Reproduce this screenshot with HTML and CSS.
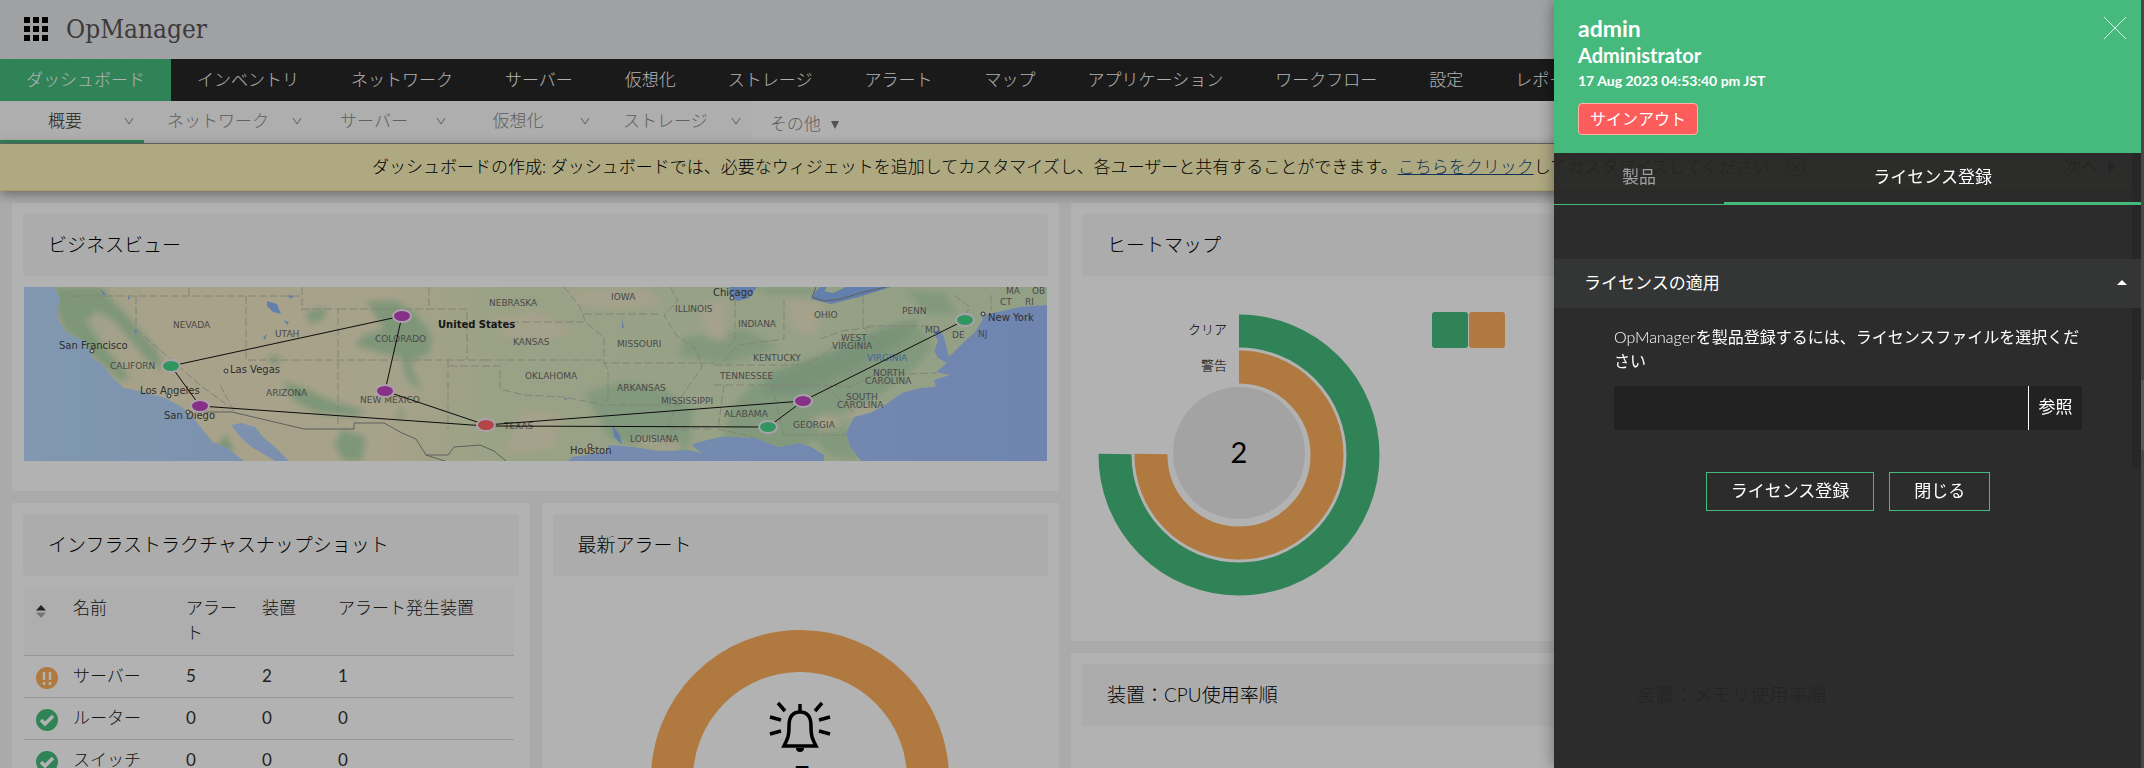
FILE: index.html
```html
<!DOCTYPE html>
<html lang="ja">
<head>
<meta charset="utf-8">
<meta name="viewport" content="width=device-width, initial-scale=1">
<title>OpManager</title>
<link rel="stylesheet" href="styles.css">
</head>
<body>
<div class="app">
  <header class="topbar">
    <button class="apps" aria-label="アプリ一覧">
      <svg width="24" height="24" viewBox="0 0 24 24"><path d="M0 0h6v6H0zM9 0h6v6H9zM18 0h6v6h-6zM0 9h6v6H0zM9 9h6v6H9zM18 9h6v6h-6zM0 18h6v6H0zM9 18h6v6H9zM18 18h6v6h-6z"/></svg>
    </button>
    <span class="brand">OpManager</span>
  </header>
  <nav class="mainnav">
    <a href="#" class="active">ダッシュボード</a><a href="#">インベントリ</a><a href="#">ネットワーク</a><a href="#">サーバー</a><a href="#">仮想化</a><a href="#">ストレージ</a><a href="#">アラート</a><a href="#">マップ</a><a href="#">アプリケーション</a><a href="#">ワークフロー</a><a href="#">設定</a><a href="#">レポート</a>
  </nav>
  <nav class="subnav">
    <a href="#" class="active">概要<svg class="chev" viewBox="0 0 10 8"><path d="M1 1l4 6 4-6"/></svg></a>
    <a href="#">ネットワーク<svg class="chev" viewBox="0 0 10 8"><path d="M1 1l4 6 4-6"/></svg></a>
    <a href="#">サーバー<svg class="chev" viewBox="0 0 10 8"><path d="M1 1l4 6 4-6"/></svg></a>
    <a href="#">仮想化<svg class="chev" viewBox="0 0 10 8"><path d="M1 1l4 6 4-6"/></svg></a>
    <a href="#">ストレージ<svg class="chev" viewBox="0 0 10 8"><path d="M1 1l4 6 4-6"/></svg></a>
    <button class="more">その他<svg width="8" height="8" viewBox="0 0 8 8"><path d="M0 0h8L4 8z"/></svg></button>
  </nav>
  <div class="notice">
    <p>ダッシュボードの作成: ダッシュボードでは、必要なウィジェットを追加してカスタマイズし、各ユーザーと共有することができます。<a href="#">こちらをクリック</a>してカスタマイズしてください</p>
    <button class="dismiss" aria-label="閉じる"><svg width="20" height="20" viewBox="0 0 20 20"><circle cx="10" cy="10" r="9"/><path d="M6 6l8 8M14 6l-8 8"/></svg></button>
    <a class="next" href="#">次へ<svg width="8" height="14" viewBox="0 0 8 14"><path d="M0 0l8 7-8 7z"/></svg></a>
  </div>

  <main class="board">
    <section class="card c-map">
      <h2>ビジネスビュー</h2>
      <svg class="map" viewBox="0 0 1023 174">
        <defs>
          <linearGradient id="land" x1="0" x2="1"><stop offset="0" stop-color="#e4e6c4"/><stop offset=".12" stop-color="#f2e9c6"/><stop offset=".33" stop-color="#f0e9c6"/><stop offset=".45" stop-color="#dde8c0"/><stop offset="1" stop-color="#d2e6bf"/></linearGradient>
          <linearGradient id="sea" x1="0" x2="1"><stop offset="0" stop-color="#b9dafc"/><stop offset=".25" stop-color="#b2cffa"/><stop offset="1" stop-color="#9fbffc"/></linearGradient>
          <filter id="soft"><feGaussianBlur stdDeviation="3"/></filter>
          <clipPath id="shape"><path id="us" d="M31 0L36 13 33 22 33 31 43 46 52 50 60 53 69 71 79 78 88 90 100 101 121 105 141 111 158 120 169 130 179 143 189 155 203 161 220 174H251L241 168 229 161 217 151 207 138 217 136 231 140 239 150 251 160 265 174H544L548 170 582 165 585 158 610 160 635 164 664 163 678 166 667 158 675 155 696 150 714 150 732 151 742 155 755 160 775 156 787 160 800 168 800 174H837L826 160 822 146 830 130 848 125 864 116 878 106 896 101 912 100 910 93 926 88 912 85 923 76 914 71 910 64 914 54 909 44 916 43 920 50 922 59 925 70 939 56 950 46 957 36 960 28 996 20 1023 18V0Z"/></clipPath>
        </defs>
        <rect width="1023" height="174" fill="url(#sea)"/>
        <use href="#us" fill="url(#land)"/>
        <g clip-path="url(#shape)">
          <g filter="url(#soft)">
            <path fill="#b6d8ad" d="M31 0L80 0 84 8 108 34 134 64 140 84 122 72 92 36 74 24 62 34 80 60 106 90 96 94 72 72 40 42 32 20ZM282 24l22 -4 -6 14 -14 2ZM342 14l30 0 20 12 16 22 -2 18 -16 8 -26 -6 -34 -10 10 -10 20 -6ZM258 94l20 6 30 14 34 10 -10 6 -40 -4 -24 -14ZM318 142l24 8 -4 24 -18 0 -10 -16ZM372 30l10 0 6 50 10 24 -14 -10 -8 -26ZM240 70l18 -2 -6 12ZM374 118l6 10 -6 8Z"/>
            <path fill="#bcdcb3" d="M560 106l40 -12 40 8 30 22 -6 40 -50 -4 -30 -10ZM660 50l60 -8 36 18 -56 18 -46 -10ZM730 96l50 -10 40 -26 40 -14 36 -6 14 20 -24 26 -40 30 -30 10 -30 30 -40 16 -50 -10 10 -40ZM780 140l40 -6 14 40 -30 -6ZM720 0h80l-20 8h-30ZM880 2l40 4 14 20 -30 2Z"/>
            <path fill="#aed3ae" d="M744 86l60 -20 50 -24 40 -10 -10 20 -50 30 -60 26 -36 0ZM190 166l12 -20 8 20Z"/>
            <path fill="#ece7c6" d="M676 18l26 -4 0 40 -20 -4ZM462 30l50 -6 40 20 -30 10 -44 -4ZM820 126l26 -10 14 2 -22 14ZM786 132l22 -6 10 14 -20 4ZM620 152l40 4 -10 8 -40 -6ZM544 2l80 0 14 16 -50 4 -34 -4ZM500 120l40 10 -10 30 -50 8ZM760 12l40 4 -10 34 -22 -8Z"/>
          </g>
          <g fill="#8fb7f5">
            <path d="M243 14l10 3 4 10 -8 -2 -6 -6ZM239 50l4 -3 -2 6ZM260 33l5 2 -2 3ZM264 8l6 1 -4 3ZM76 2l6 5 -2 2ZM110 42l3 1 -1 6ZM104 8l2 3 -2 2ZM588 138l8 10 2 10 -8 -8ZM598 32l2 8 -2 2ZM780 60l2 2ZM540 110l4 2 -3 1Z"/>
            <path d="M705 0L707 10 714 14 725 11 733 0ZM787 12L807 17 835 10 867 0H822L809 6 800 4 803 0H796L790 6Z"/>
          </g>
        </g>
        <path class="state" d="M48 9H278M112 9V42L176 98 206 120M165 0V9M222 9V73H460M278 0V24M278 22H314V138M314 22H443V73M405 0V22M443 35H560M424 73V142M425 79H476V102L500 108 540 110 580 118M460 73H578L584 82 584 118H656M540 0L556 20 562 36 580 50 580 76H690M560 27H634M646 0L654 14 640 28 652 48 672 62 678 80 664 100 652 118 644 142 690 142M711 12V54L700 62M760 13V52L714 58 700 74M690 78H780L800 68 822 48M839 9V39H910M796 52L818 44 850 40M838 39L860 62M690 98H800L826 100 850 88 912 86M700 98L694 142 730 150M748 98L760 148 822 148M800 98L830 126M196 98L210 124M967 8V24M930 8L946 20 938 34"/>
        <path class="border" d="M172 125H208L280 142H330V136H360L378 146 392 152 402 168 424 175M402 168L424 168 430 160 456 158 470 164 482 174M792 0L788 10 800 14 816 12 840 5 862 0"/>
        <g class="states">
          <text x="149" y="41">NEVADA</text><text x="251" y="50">UTAH</text><text x="351" y="55">COLORADO</text><text x="86" y="82">CALIFORN</text>
          <text x="242" y="109">ARIZONA</text><text x="336" y="116">NEW MEXICO</text><text x="465" y="19">NEBRASKA</text><text x="489" y="58">KANSAS</text><text x="501" y="92">OKLAHOMA</text>
          <text x="480" y="142">TEXAS</text><text x="587" y="13">IOWA</text><text x="651" y="25">ILLINOIS</text><text x="593" y="60">MISSOURI</text><text x="593" y="104">ARKANSAS</text>
          <text x="637" y="117">MISSISSIPPI</text><text x="700" y="130">ALABAMA</text><text x="606" y="155">LOUISIANA</text><text x="714" y="40">INDIANA</text><text x="790" y="31">OHIO</text>
          <text x="729" y="74">KENTUCKY</text><text x="696" y="92">TENNESSEE</text><text x="817" y="54">WEST</text><text x="808" y="62">VIRGINIA</text><text x="849" y="89">NORTH</text><text x="841" y="97">CAROLINA</text>
          <text x="822" y="113">SOUTH</text><text x="813" y="121">CAROLINA</text><text x="769" y="141">GEORGIA</text><text x="878" y="27">PENN</text><text x="901" y="46">MD</text><text x="928" y="51">DE</text><text x="954" y="50">NJ</text>
          <text x="982" y="7">MA</text><text x="976" y="18">CT</text><text x="1001" y="18">RI</text><text x="1008" y="7">OB</text><text x="843" y="74" class="blue">VIRGINIA</text>
        </g>
        <g class="cities">
          <text x="35" y="62">San Francisco</text><text x="116" y="107">Los Angeles</text><text x="140" y="132">San Diego</text><text x="206" y="86">Las Vegas</text>
          <text x="689" y="9">Chicago</text><text x="546" y="167">Houston</text><text x="964" y="34">New York</text><text x="414" y="41" class="country">United States</text>
        </g>
        <g class="spots"><circle cx="68" cy="64" r="2"/><circle cx="145" cy="109" r="2"/><circle cx="164" cy="125" r="2"/><circle cx="202" cy="84" r="2"/><circle cx="708" cy="11" r="2"/><circle cx="566" cy="159" r="2"/><circle cx="959" cy="27" r="2"/></g>
        <path class="links" d="M147 79L378 29 361 104 462 138 779 114 941 33M147 79L176 119 462 139 744 140 779 114"/>
        <g class="nodes">
          <g fill="#46d689"><ellipse cx="147" cy="79" rx="9" ry="6"/><ellipse cx="744" cy="140" rx="9" ry="6"/><ellipse cx="941" cy="33" rx="9" ry="6"/></g>
          <g fill="#c145c1"><ellipse cx="176" cy="119" rx="9" ry="6"/><ellipse cx="378" cy="29" rx="9" ry="6"/><ellipse cx="361" cy="104" rx="9" ry="6"/><ellipse cx="779" cy="114" rx="9" ry="6"/></g>
          <ellipse fill="#ff6464" cx="462" cy="138" rx="9" ry="6"/>
        </g>
      </svg>
    </section>

    <section class="card c-heat">
      <h2>ヒートマップ</h2>
      <div class="heat">
        <svg width="300" height="300" viewBox="0 0 300 300">
          <path d="M156 19A124 124 0 1 1 32 142" fill="none" stroke="#46bb7d" stroke-width="33"/>
          <path d="M156 55A88 88 0 1 1 68 142" fill="none" stroke="#fbae5b" stroke-width="33"/>
          <circle cx="156" cy="141" r="66" fill="#eaeaea"/>
          <text class="num" x="156" y="151">2</text>
          <text class="lab" x="144" y="22">クリア</text>
          <text class="lab" x="144" y="58">警告</text>
        </svg>
        <div class="tiles"><i class="g"></i><i class="o"></i></div>
      </div>
    </section>

    <section class="card c-infra">
      <h2>インフラストラクチャスナップショット</h2>
      <table>
        <colgroup><col class="w0"><col class="w1"><col class="w2"><col class="w2"><col></colgroup>
        <thead><tr><th><svg width="10" height="13" viewBox="0 0 10 13"><path d="M0 5.500L5 0l5 5.500z" fill="#333"/><path d="M0 7.500L5 13l5-5.500z" fill="#aaa"/></svg></th><th>名前</th><th>アラート</th><th>装置</th><th>アラート発生装置</th></tr></thead>
        <tbody>
          <tr><td><svg width="22" height="22" viewBox="0 0 22 22"><circle cx="11" cy="11" r="11" fill="#fbae5b"/><path d="M8 5v8M14 5v8M8 15v3M14 15v3" stroke="#fff" stroke-width="2.500"/></svg></td><td>サーバー</td><td class="n">5</td><td class="n">2</td><td class="n">1</td></tr>
          <tr><td><svg width="22" height="22" viewBox="0 0 22 22"><circle cx="11" cy="11" r="11" fill="#46bb7d"/><path d="M5 11l4 4 8-8" fill="none" stroke="#fff" stroke-width="3.500"/></svg></td><td>ルーター</td><td class="n">0</td><td class="n">0</td><td class="n">0</td></tr>
          <tr><td><svg width="22" height="22" viewBox="0 0 22 22"><circle cx="11" cy="11" r="11" fill="#46bb7d"/><path d="M5 11l4 4 8-8" fill="none" stroke="#fff" stroke-width="3.500"/></svg></td><td>スイッチ</td><td class="n">0</td><td class="n">0</td><td class="n">0</td></tr>
        </tbody>
      </table>
    </section>

    <section class="card c-alerts">
      <h2>最新アラート</h2>
      <div class="ringbox">
        <svg width="298" height="298" viewBox="0 0 298 298">
          <circle cx="149" cy="149" r="128" fill="none" stroke="#fbae5b" stroke-width="42"/>
          <g fill="none" stroke="#000" stroke-width="3.500">
            <path d="M149 74v7M133 116C137 108 138 106 138 96C138 86 142 82 149 82S160 86 160 96C160 106 161 108 165 116Z"/>
            <path d="M127 73l7 8M171 73l-7 8M119 87l11 3M179 87l-11 3M119 104l11-3M179 104l-11-3"/>
          </g>
          <path d="M145 118h8a4 4 0 0 1-8 0z"/>
          <text class="big" x="150" y="161">5</text>
        </svg>
      </div>
    </section>

    <section class="card c-cpu"><h2>装置：CPU使用率順</h2></section>
    <section class="card c-mem"><h2>装置：メモリ使用率順</h2></section>
  </main>
</div>

<div class="shade"></div>
<div class="rail"><span></span></div>

<aside class="drawer">
  <header class="profile">
    <h1>admin</h1>
    <h3>Administrator</h3>
    <p>17 Aug 2023 04:53:40 pm JST</p>
    <button class="signout">サインアウト</button>
    <button class="close" aria-label="閉じる"><svg width="22" height="22" viewBox="0 0 22 22"><path d="M0 0l22 22M22 0L0 22"/></svg></button>
  </header>
  <div class="body">
    <span class="thumb"></span>
    <div class="tabs">
      <button>製品</button>
      <button class="active">ライセンス登録</button>
    </div>
    <button class="section">ライセンスの適用<svg width="10" height="5" viewBox="0 0 10 5"><path d="M5 0l5 5H0z"/></svg></button>
    <form class="license">
      <label for="file"><span>OpManager</span>を製品登録するには、ライセンスファイルを選択ください</label>
      <div class="file"><input id="file" type="text"><button type="button">参照</button></div>
      <div class="actions"><button type="button">ライセンス登録</button><button type="button">閉じる</button></div>
    </form>
  </div>
</aside>
</body>
</html>
```
FILE: styles.css
```css
* { box-sizing: border-box; }
body {
  margin: 0;
  height: 100vh;
  overflow: hidden;
  font: 300 17px/24px Lato, "Noto Sans CJK JP", sans-serif;
  color: #222;
  background: #f4f4f4;
}
button, input { font: inherit; color: inherit; background: none; border: 0; padding: 0; margin: 0; }
a { color: inherit; text-decoration: none; }
h1, h2, h3, p { margin: 0; }

.app { height: 100vh; display: flex; flex-direction: column; overflow: hidden; }
.topbar {
  flex: none;
  height: 59px;
  display: flex;
  align-items: center;
  gap: 18px;
  padding: 0 24px 2px;
  background: repeating-linear-gradient(115deg, #e7e9eb 0 3px, #e5e7e9 3px 7px);
}
.apps { display: flex; }
.brand { font: 300 26px/32px "DejaVu Serif Condensed", "DejaVu Serif", serif; color: #555; }

.mainnav { flex: none; display: flex; height: 42px; background: #262626; color: #fff; white-space: nowrap; overflow: hidden; }
.mainnav a { padding: 9px 26px; }
.mainnav .active { background: #46bb7d; }

.subnav { flex: none; display: flex; height: 43px; background: #fdfdfd; color: #888; border-bottom: 1px solid #999; }
.subnav a { position: relative; min-width: 144px; padding: 8px 43px 7px 23px; text-align: center; background: #f9f9f9; }
.subnav .active { color: #333; border-bottom: 3px solid #46bb7d; padding-left: 29px; }
.chev { position: absolute; right: 10px; top: 16px; width: 10px; height: 8px; fill: none; stroke: #888; stroke-width: 1; }
.more { display: flex; align-items: center; gap: 10px; padding: 3px 0 0 19px; }
.more svg { fill: #777; margin-top: 3px; }

.notice {
  flex: none;
  display: flex;
  align-items: center;
  height: 47px;
  padding: 0 28px 0 372px;
  white-space: nowrap;
  color: #000;
  background: #fbf2ba;
  border-bottom: 1px solid #f0e08a;
  box-shadow: 0 3px 12px rgba(0, 0, 0, .4);
  position: relative;
  z-index: 1;
}
.notice p a { color: #164a7c; text-decoration: underline; }
.dismiss { display: flex; margin-left: 16px; }
.dismiss svg { fill: none; stroke: #444; }
.next { display: flex; align-items: center; gap: 10px; margin-left: auto; }
.next svg { fill: #164a7c; }

.board {
  flex: 1 0 0;
  min-height: 0;
  display: grid;
  grid-template-columns: repeat(4, minmax(0, 1fr));
  grid-template-rows: 288px 138px 400px;
  gap: 12px;
  padding: 12px 26px 0 12px;
}
.card { background: #fff; padding: 11px; min-width: 0; }
.card h2 { font-size: 19px; font-weight: 300; line-height: 30px; padding: 16px 25px; color: #000; background: #f7f7f7; border-radius: 3px; }
.c-map { grid-area: 1 / 1 / 2 / 3; }
.c-heat { grid-area: 1 / 3 / 3 / 5; }
.c-infra { grid-area: 2 / 1 / 4 / 2; }
.c-alerts { grid-area: 2 / 2 / 4 / 3; }
.c-cpu { grid-area: 3 / 3 / 4 / 4; }
.c-mem { grid-area: 3 / 4 / 4 / 5; }

.map { display: block; width: 100%; padding: 0 1px; margin-top: 11px; }
.state { fill: none; stroke: #bcbcaa; stroke-width: 1; stroke-dasharray: 8 3; }
.border { fill: none; stroke: #888; }
.states { font: 400 9px "DejaVu Sans", sans-serif; fill: #6a6a6a; }
.states .blue { fill: #5a92d8; }
.cities { font: 400 10px "DejaVu Sans", sans-serif; fill: #444; }
.cities .country { font-weight: 700; fill: #222; }
.spots { fill: #fff; stroke: #444; }
.links { fill: none; stroke: #111; stroke-width: 1; }
.nodes { stroke: #f4e9f4; stroke-width: 2; }

.heat { display: flex; gap: 49px; padding: 36px 0 0 1px; }
.heat svg { flex: none; overflow: visible; }
.num { font-size: 29px; font-weight: 400; text-anchor: middle; }
.lab { font-size: 13px; text-anchor: end; fill: #000; }
.tiles { display: flex; gap: 1px; }
.tiles i { width: 36px; height: 36px; border-radius: 3px; }
.tiles .g { background: #46bb7d; }
.tiles .o { background: #fbae5b; }

table { width: 490px; max-width: 100%; margin: 11px 0 0 1px; table-layout: fixed; border-collapse: collapse; }
.w0 { width: 49px; }
.w1 { width: 113px; }
.w2 { width: 76px; }
th, td { text-align: left; vertical-align: top; font-weight: 300; padding: 8px 16px 8px 0; border-bottom: 1px solid #d8d8d8; }
th { padding-bottom: 10px; line-height: 25px; background: #fafafa; }
th:first-child, td:first-child { padding-left: 12px; padding-right: 0; }
th svg { margin-top: 10px; display: block; }
td svg { display: block; margin-top: 3px; }
.n { font-weight: 400; color: #333; }

.ringbox { display: flex; justify-content: center; padding-top: 54px; }
.ringbox svg { flex: none; }
.big { font-size: 34px; font-weight: 900; text-anchor: middle; }

.shade { position: fixed; inset: 0; background: rgba(0, 0, 0, .3); z-index: 2; }
.rail { position: fixed; top: 0; right: 0; width: 3px; height: 100vh; background: #4a4845; z-index: 4; padding-top: 380px; }
.rail span { display: block; height: 70px; background: #5b5956; }

.drawer {
  position: fixed;
  top: 0;
  right: 3px;
  bottom: 0;
  width: 587px;
  z-index: 3;
  color: #fff;
  font-weight: 400;
  display: flex;
  flex-direction: column;
  box-shadow: 0 0 16px rgba(0, 0, 0, .4);
}
.profile { position: relative; height: 153px; padding: 15px 24px 0; background: #46b97c; }
.profile h1 { font-size: 23px; line-height: 27px; font-weight: 700; }
.profile h3 { font-size: 20px; line-height: 26px; font-weight: 700; }
.profile p { font-size: 14px; line-height: 26px; font-weight: 700; }
.signout { display: block; margin-top: 9px; height: 32px; padding: 0 11px; font-size: 16px; background: #fd5c5c; border: 1px solid #f8b4a8; border-radius: 4px; }
.close { position: absolute; top: 17px; right: 15px; display: flex; }
.close svg { stroke: #d8f2e4; fill: none; }
.body { position: relative; flex: 1; background: rgba(37, 37, 37, .95); }
.thumb { position: absolute; top: 0; right: 0; width: 9px; height: 317px; background: #272727; border-radius: 0 0 4px 4px; }
.tabs { position: relative; display: flex; height: 52px; }
.tabs button { flex: 29 0 0; padding-bottom: 4px; color: #a0a0a0; border-bottom: 1px solid #46b97c; }
.tabs .active { flex-grow: 71; color: #fff; border-bottom-width: 3px; padding-bottom: 2px; }
.section { position: relative; display: flex; width: 100%; height: 49px; margin-top: 54px; align-items: center; justify-content: space-between; padding: 0 14px 2px 30px; background: #343635; }
.section svg { fill: #fff; }
.license { padding: 17px 59px 0 60px; }
.license label { display: block; font-size: 16px; line-height: 24px; }
.license label span { font-weight: 300; }
.file { display: flex; height: 44px; margin-top: 13px; background: #222; }
.file input { flex: 1; min-width: 0; padding: 0 12px; }
.file button { width: 54px; padding-bottom: 2px; border-left: 1px solid #fff; }
.actions { display: flex; justify-content: center; gap: 15px; margin-top: 42px; }
.actions button { height: 39px; padding: 0 24px 2px; border: 1px solid #46b97c; }
```
